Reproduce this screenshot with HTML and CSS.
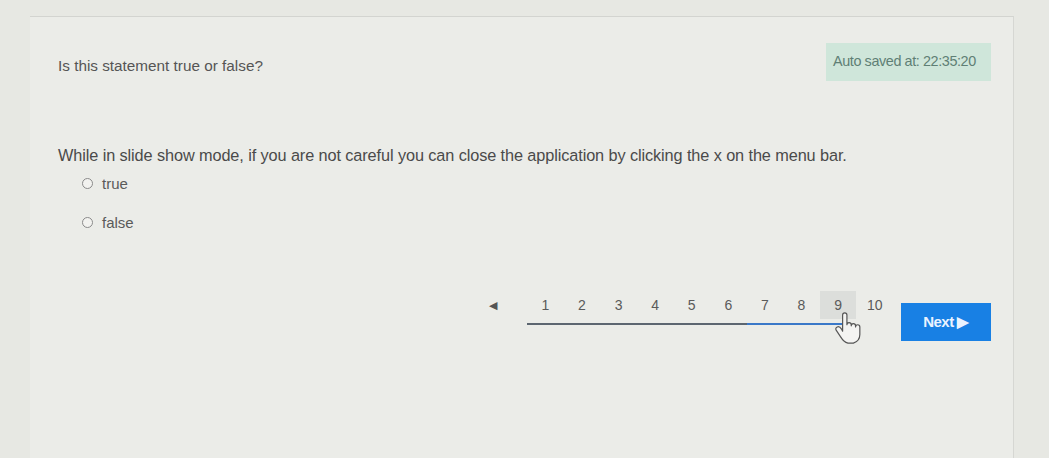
FILE: index.html
```html
<!DOCTYPE html>
<html>
<head>
<meta charset="utf-8">
<link rel="stylesheet" href="styles.css">
</head>
<body>
<div class="card">
  <div class="top">
    <div class="prompt">Is this statement true or false?</div>
    <div class="saved">Auto saved at: 22:35:20</div>
  </div>
  <div class="question">While in slide show mode, if you are not careful you can close the application by clicking the x on the menu bar.</div>
  <div class="options">
    <label class="opt"><span class="radio"></span>true</label>
    <label class="opt"><span class="radio"></span>false</label>
  </div>
  <div class="nav">
    <span class="prev">&#9664;</span>
    <div class="pages">
      <div class="nums">
        <span class="pg">1</span><span class="pg">2</span><span class="pg">3</span><span class="pg">4</span><span class="pg">5</span><span class="pg">6</span><span class="pg">7</span><span class="pg">8</span><span class="pg cur">9
          <svg class="hand" width="28" height="34" viewBox="0 0 26 30"><path d="M8 3 Q8 1 10 1 Q12 1 12 3 L12 12 Q12 10 14 10 Q16 10 16 12 L16 13 Q16 11 18 11 Q20 11 20 13 L20 14 Q20 12 22 12 Q24 12 24 14 L24 21 Q24 27 18 29 L13 29 Q9 28 6 23 L2 17 Q1 15 3 14 Q5 13 7 16 L8 18 Z" fill="#f4f4f2" stroke="#555" stroke-width="1.1" stroke-linejoin="round"/></svg>
        </span><span class="pg">10</span>
      </div>
      <div class="track"><div class="fill"></div></div>
    </div>
    <button class="next">Next &#9654;</button>
  </div>
</div>
</body>
</html>
```

FILE: styles.css
```css
html, body {
  margin: 0;
  padding: 0;
}
body {
  width: 1049px;
  height: 458px;
  background: #e7e8e3;
  font-family: "Liberation Sans", Arial, sans-serif;
  color: #555;
  overflow: hidden;
  padding-top: 16px;
  box-sizing: border-box;
}
.card {
  margin-left: 30px;
  width: 984px;
  height: 460px;
  background: #ebece8;
  border-top: 1px solid #d3d4d0;
  border-right: 1px solid #d6d7d3;
  box-sizing: border-box;
  padding: 26px 22px 0 28px;
}
.top {
  display: flex;
  justify-content: space-between;
  align-items: flex-start;
}
.prompt {
  font-size: 15.3px;
  padding-top: 14px;
  color: #555;
}
.saved {
  background: #cfe6da;
  color: #5f7f75;
  font-size: 14.4px;
  letter-spacing: -0.4px;
  padding: 10px 6px 12px 7px;
  width: 152px;
}
.question {
  margin-top: 65px;
  font-size: 16.3px;
  color: #4a4a4a;
  letter-spacing: -0.1px;
}
.options {
  margin-top: 10px;
  padding-left: 24px;
  display: flex;
  flex-direction: column;
  gap: 22px;
}
.opt {
  display: flex;
  align-items: center;
  font-size: 15px;
  color: #5a5a5a;
}
.radio {
  width: 9px;
  height: 9px;
  border: 1px solid #8a8a8a;
  border-radius: 50%;
  background: #f2f2ef;
  margin-right: 9px;
}
.nav {
  margin-top: 60px;
  display: flex;
  align-items: flex-start;
  justify-content: flex-end;
}
.prev {
  font-size: 11px;
  color: #555;
  margin-top: 8px;
  margin-right: 30px;
}
.pages {
  display: flex;
  flex-direction: column;
}
.nums {
  display: flex;
}
.pg {
  width: 36.6px;
  height: 28px;
  display: flex;
  align-items: center;
  justify-content: center;
  font-size: 14px;
  color: #5a5a5a;
  position: relative;
}
.pg.cur {
  background: #dcdedb;
}
.hand {
  position: absolute;
  left: 14px;
  top: 20px;
}
.track {
  height: 2px;
  background: #5c6670;
  width: 318px;
  margin-top: 4px;
}
.fill {
  margin-left: 220px;
  height: 2px;
  background: #3a78c8;
}
.next {
  margin-left: 8px;
  margin-top: 12px;
  width: 90px;
  height: 38px;
  background: #1880e4;
  border: none;
  color: #eaf3ff;
  font-family: "Liberation Sans", Arial, sans-serif;
  font-size: 15px;
  font-weight: bold;
  letter-spacing: -0.5px;
}
```
